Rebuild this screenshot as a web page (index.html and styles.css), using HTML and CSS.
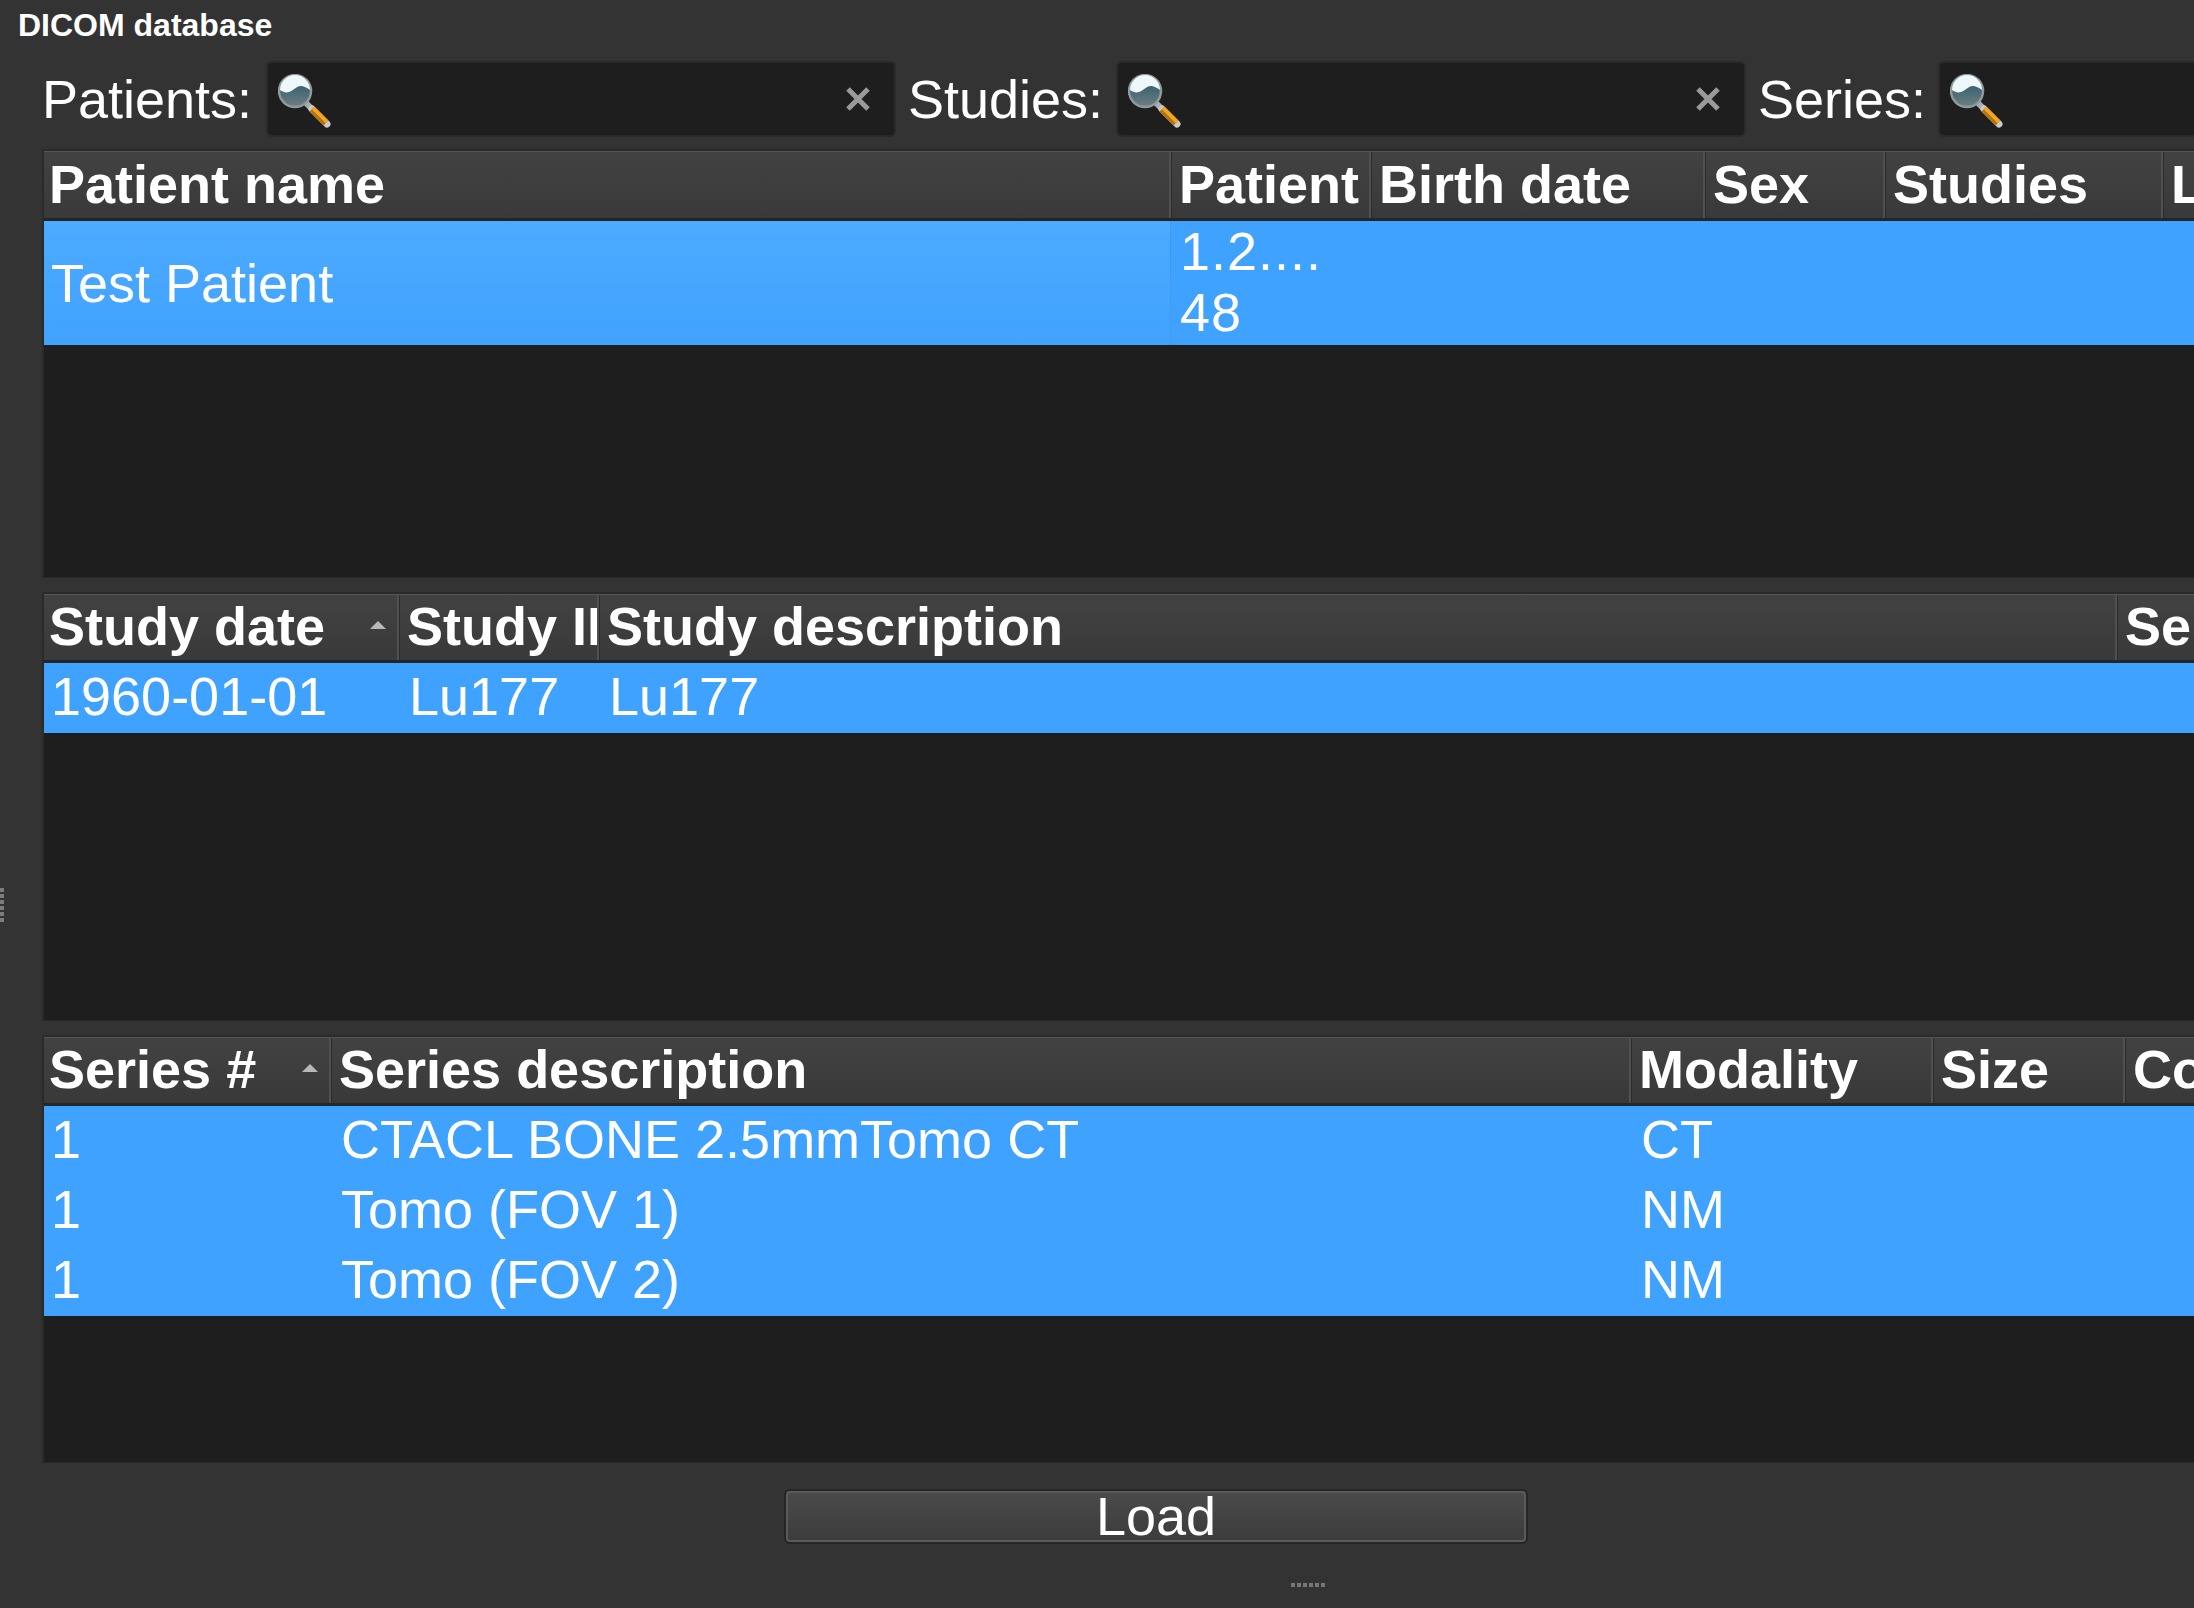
FILE: index.html
```html
<!DOCTYPE html>
<html>
  <head>
    <link rel="stylesheet" href="styles.css">
    <title>DICOM database</title>
  </head>
  <body>
    <div class="title">DICOM database</div>

    <svg width="0" height="0" class="defs">
      <defs>
        <linearGradient id="lensFill" x1="0" y1="0" x2="0" y2="1">
          <stop offset="0" stop-color="#1f5468" />
          <stop offset="1" stop-color="#6f7f83" />
        </linearGradient>
        <symbol id="magnifier" viewBox="0 0 54 54">
          <path d="M28 29l6 6" stroke="#a9aeb0" stroke-width="6" stroke-linecap="round" />
          <path d="M34 35l15 15" stroke="#c9cbcb" stroke-width="7" stroke-linecap="round" />
          <path d="M34 35l14 14" stroke="#b4740f" stroke-width="7" />
          <path d="M35 34l14 14" stroke="#f5a623" stroke-width="3.5" />
          <circle cx="17" cy="17" r="16" fill="url(#lensFill)" stroke="#8f9a9d" stroke-width="2.5" />
          <path d="M2 16C5 18 8 19 11 18C15 17 19 11 24 12C27 12.500 30 14.500 32 16A15 15 0 0 0 2 16Z" fill="#eef8fb" />
        </symbol>
        <symbol id="clear" viewBox="0 0 26 26">
          <path d="M3 3L23 23M23 3L3 23" stroke="#9a9a9a" stroke-width="5" />
        </symbol>
      </defs>
    </svg>

    <div class="filters">
      <label class="filter-label">Patients:</label>
      <div class="search">
        <svg class="search-icon"><use href="#magnifier" /></svg>
        <svg class="search-clear"><use href="#clear" /></svg>
      </div>
      <label class="filter-label filter-label-next">Studies:</label>
      <div class="search">
        <svg class="search-icon"><use href="#magnifier" /></svg>
        <svg class="search-clear"><use href="#clear" /></svg>
      </div>
      <label class="filter-label filter-label-next">Series:</label>
      <div class="search">
        <svg class="search-icon"><use href="#magnifier" /></svg>
        <svg class="search-clear"><use href="#clear" /></svg>
      </div>
    </div>

    <div class="tables">
      <!-- Patients -->
      <div class="table patients">
        <div class="row head">
          <div class="cell">Patient name</div>
          <div class="cell">Patient</div>
          <div class="cell">Birth date</div>
          <div class="cell">Sex</div>
          <div class="cell">Studies</div>
          <div class="cell">Last study date</div>
        </div>
        <div class="row selected">
          <div class="cell current">Test Patient</div>
          <div class="cell wrap">1.2....<br>48</div>
          <div class="cell"></div>
          <div class="cell"></div>
          <div class="cell"></div>
          <div class="cell"></div>
        </div>
      </div>

      <!-- Studies -->
      <div class="table studies">
        <div class="row head">
          <div class="cell sorted">Study date<span class="sort-arrow"></span></div>
          <div class="cell">Study ID</div>
          <div class="cell">Study description</div>
          <div class="cell">Series</div>
        </div>
        <div class="row selected">
          <div class="cell">1960-01-01</div>
          <div class="cell">Lu177</div>
          <div class="cell">Lu177</div>
          <div class="cell"></div>
        </div>
      </div>

      <!-- Series -->
      <div class="table series">
        <div class="row head">
          <div class="cell sorted">Series #<span class="sort-arrow"></span></div>
          <div class="cell">Series description</div>
          <div class="cell">Modality</div>
          <div class="cell">Size</div>
          <div class="cell">Count</div>
        </div>
        <div class="row selected">
          <div class="cell">1</div>
          <div class="cell">CTACL BONE 2.5mmTomo CT</div>
          <div class="cell">CT</div>
          <div class="cell"></div>
          <div class="cell"></div>
        </div>
        <div class="row selected">
          <div class="cell">1</div>
          <div class="cell">Tomo (FOV 1)</div>
          <div class="cell">NM</div>
          <div class="cell"></div>
          <div class="cell"></div>
        </div>
        <div class="row selected">
          <div class="cell">1</div>
          <div class="cell">Tomo (FOV 2)</div>
          <div class="cell">NM</div>
          <div class="cell"></div>
          <div class="cell"></div>
        </div>
      </div>
    </div>

    <button class="load" type="button">Load</button>

    <div class="grip grip-left"></div>
    <div class="grip grip-bottom"></div>
  </body>
</html>
```

FILE: styles.css
```css
/* Page */
* {
  box-sizing: border-box;
}
html,
body {
  height: 100%;
}
body {
  margin: 0;
  overflow: hidden;
  background: #333333;
  color: #ffffff;
  font-family: "Liberation Sans", Arial, sans-serif;
  font-size: 54px;
  line-height: 61px;
}
.defs {
  display: block;
  height: 0;
}

/* Title */
.title {
  height: 61px;
  padding: 9px 0 0 18px;
  font-size: 32px;
  font-weight: bold;
  line-height: 33px;
}

/* Search row */
.filters {
  display: grid;
  grid-template-columns: 224px 630px 220px 630px 192px 628px;
  width: 2800px;
  height: 76px;
  padding-left: 42px;
  margin-bottom: 12px;
}
.filter-label {
  align-self: center;
}
.filter-label-next {
  padding-left: 12px;
}
.search {
  display: flex;
  align-items: center;
  justify-content: space-between;
  padding: 0 23px 0 10px;
  background: #1e1e1e;
  border: 2px solid #2a2a2a;
  border-radius: 6px;
}
.search-icon {
  width: 54px;
  height: 54px;
  margin-top: 3px;
}
.search-clear {
  width: 26px;
  height: 26px;
}

/* Tables */
.tables {
  display: flex;
  flex-direction: column;
  gap: 14px;
  width: 2800px;
  margin-left: 42px;
}
.table {
  height: 429px;
  background: #1e1e1e;
  border: 2px solid #2a2a2a;
  border-bottom-width: 1px;
}
.table.series {
  height: 428px;
}
.row {
  display: grid;
}
.patients .row {
  grid-template-columns: 1127px 200px 334px 180px 278px 400px;
}
.studies .row {
  grid-template-columns: 355px 200px 1518px 300px;
}
.series .row {
  grid-template-columns: 287px 1300px 302px 192px 300px;
}
.cell {
  overflow: hidden;
  padding: 3px 0 0 7px;
  white-space: nowrap;
}
.cell + .cell {
  padding-left: 10px;
}

/* Header row */
.head {
  height: 69px;
  background: linear-gradient(#424242, #393939);
  border-top: 1px solid #555555;
  border-bottom: 3px solid #252525;
  font-weight: bold;
}
.patients .head {
  height: 70px;
}
.head .cell {
  padding: 1px 0 0 5px;
  border-right: 2px solid #505050;
  box-shadow: 1px 0 0 #2c2c2c;
}
.head .cell + .cell {
  padding-left: 8px;
}
.patients .head .cell {
  padding-top: 2px;
}
.head .sorted {
  display: flex;
  justify-content: space-between;
  padding-right: 11px;
}
.sort-arrow {
  align-self: center;
  width: 0;
  height: 0;
  margin-bottom: 7px;
  border-left: 8px solid transparent;
  border-right: 8px solid transparent;
  border-bottom: 8px solid #b8b8b8;
}

/* Data rows */
.selected {
  background: #3fa2ff;
}
.selected .cell {
  height: 70px;
}
.patients .selected .cell {
  display: flex;
  align-items: center;
  height: 124px;
  padding: 0 0 0 7px;
}
.patients .selected .current {
  background: linear-gradient(#4caaff, #41a3ff);
  box-shadow: inset -1px 0 0 #3d9bf2;
}
.patients .selected .wrap {
  display: block;
  padding: 0 0 0 9px;
  letter-spacing: 1px;
}

/* Load button */
.load {
  display: block;
  width: 740px;
  height: 51px;
  margin: 28px 0 0 786px;
  padding: 0;
  background: linear-gradient(#4a4a4a, #3c3c3c);
  border: 2px solid #5a5a5a;
  border-radius: 4px;
  box-shadow: 0 0 0 2px #262626;
  color: #ffffff;
  font: inherit;
  line-height: 47px;
}

/* Splitter grips, they sit on top of the panel edge */
.grip {
  position: absolute;
}
.grip-left {
  left: 0;
  top: 888px;
  width: 4px;
  height: 36px;
  background: repeating-linear-gradient(#7b7b7b 0 4px, transparent 4px 6px);
}
.grip-bottom {
  left: 1291px;
  top: 1583px;
  width: 36px;
  height: 4px;
  background: repeating-linear-gradient(90deg, #777777 0 4px, transparent 4px 6px);
}
```
